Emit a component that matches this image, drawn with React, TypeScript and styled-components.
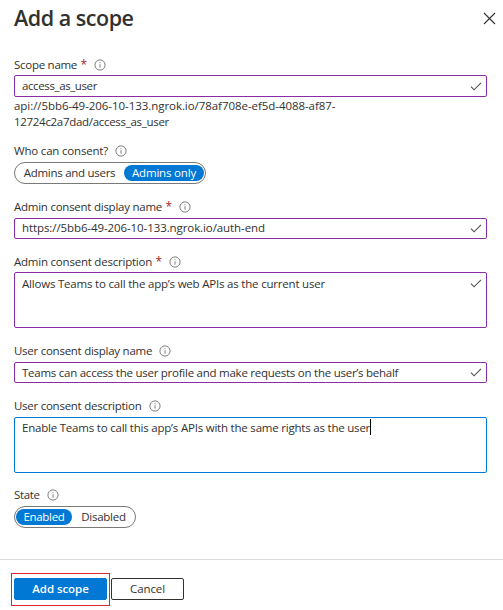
import React from 'react';
import styled, { createGlobalStyle } from 'styled-components';

const GlobalStyle = createGlobalStyle`
  body {
    margin: 0;
    background: #fff;
    color: #323130;
    font-family: 'Open Sans', 'Noto Sans', sans-serif;
    font-size: 11.5px;
    line-height: 16px;
  }
`;

const Panel = styled.main`
  display: flex;
  flex-direction: column;
  width: 503px;
  height: 610px;
  box-sizing: border-box;
  overflow: hidden;
`;

const Header = styled.header`
  display: flex;
  justify-content: space-between;
  align-items: flex-start;
  height: 55px;
  box-sizing: border-box;
  padding: 4px 7px 0 14px;
`;

const Title = styled.h1`
  margin: 0;
  font-size: 21.5px;
  font-weight: 600;
  line-height: 27px;
  letter-spacing: -0.47px;
`;

const CloseButton = styled.button`
  display: flex;
  margin: 8px 0 0;
  padding: 0;
  border: 0;
  background: none;
  color: #323130;
`;

const Form = styled.form`
  display: flex;
  flex-direction: column;
  height: 504px;
  padding: 0 16px 0 14px;
`;

const Field = styled.section<{ $after: number }>`
  display: flex;
  flex-direction: column;
  align-items: flex-start;
  margin-bottom: ${(p) => p.$after}px;
`;

const LabelRow = styled.div<{ $raised?: boolean }>`
  display: flex;
  align-items: center;
  height: 20px;
  box-sizing: border-box;
  padding-bottom: ${(p) => (p.$raised ? 2 : 0)}px;
`;

const Text = styled.span<{ $track: number }>`
  letter-spacing: ${(p) => p.$track}px;
  white-space: nowrap;
`;

const Required = styled.span`
  margin-left: 3.5px;
  width: 6.5px;
  font-size: 12px;
  color: #a4262c;
`;

const InfoSvg = styled.svg`
  margin-left: 7.3px;
`;

const Box = styled.div<{ $height: number; $top: number; $focused?: boolean }>`
  display: flex;
  justify-content: space-between;
  align-items: flex-start;
  width: 100%;
  height: ${(p) => p.$height}px;
  box-sizing: border-box;
  padding: ${(p) => p.$top}px 4px 0 7px;
  border: 1px solid ${(p) => (p.$focused ? '#0078d4' : '#8a2da5')};
  border-radius: 2px;
`;

const CheckSvg = styled.svg<{ $drop: number }>`
  margin-top: ${(p) => p.$drop}px;
`;

const Typed = styled.div`
  display: flex;
`;

const Caret = styled.i`
  width: 1px;
  height: 16px;
  margin-top: -1px;
  background: #000;
`;

const Hint = styled.div`
  display: flex;
  flex-direction: column;
  padding-top: 1px;
`;

const Pill = styled.div`
  display: flex;
  align-items: center;
  gap: 1px;
  height: 22px;
  box-sizing: border-box;
  padding: 0 1px;
  border: 1px solid #7a7977;
  border-radius: 11px;
`;

const Option = styled.span<{ $selected?: boolean; $width: number }>`
  display: flex;
  justify-content: center;
  width: ${(p) => p.$width}px;
  height: 16px;
  line-height: 15px;
  border-radius: 8px;
  background: ${(p) => (p.$selected ? '#0078d4' : 'transparent')};
  color: ${(p) => (p.$selected ? '#fff' : 'inherit')};
`;

const Footer = styled.footer`
  display: flex;
  align-items: flex-start;
  gap: 1px;
  padding: 13px 0 0 11px;
  border-top: 1px solid #dcdcdc;
`;

const Highlight = styled.div`
  display: flex;
  width: 99px;
  height: 33px;
  box-sizing: border-box;
  padding: 4px 2px;
  border: 1px solid #d92632;
`;

const Button = styled.button<{ $primary?: boolean }>`
  display: flex;
  justify-content: center;
  align-items: center;
  width: ${(p) => (p.$primary ? 93 : 73)}px;
  height: 22px;
  margin: ${(p) => (p.$primary ? 0 : '5px 0 0')};
  padding: 0;
  border: 1px solid ${(p) => (p.$primary ? '#0078d4' : '#323130')};
  border-radius: 2px;
  background: ${(p) => (p.$primary ? '#0078d4' : '#fff')};
  color: ${(p) => (p.$primary ? '#fff' : '#323130')};
  font: inherit;
  font-weight: ${(p) => (p.$primary ? 600 : 400)};
`;

const Info = () => (
  <InfoSvg width="12" height="12" viewBox="0 0 12 12" fill="none" stroke="#72706e">
    <circle cx="6" cy="6" r="5.1" strokeWidth="0.9" />
    <path d="M6 5.2v3.4M6 3.2v1" strokeWidth="0.9" />
  </InfoSvg>
);

const Check = ({ drop }: { drop: number }) => (
  <CheckSvg $drop={drop} width="12" height="9" viewBox="0 0 12 9" fill="none" stroke="#55534f" strokeWidth="1.15">
    <path d="M1 4.7L4.1 7.8L11 0.9" />
  </CheckSvg>
);

type LabelProps = { text: string; track: number; required?: boolean; raised?: boolean };

const Label = ({ text, track, required, raised }: LabelProps) => (
  <LabelRow $raised={raised}>
    <Text $track={track}>{text}</Text>
    {required && <Required>*</Required>}
    <Info />
  </LabelRow>
);

export default function App() {
  return (
    <Panel>
      <GlobalStyle />
      <Header>
        <Title>Add a scope</Title>
        <CloseButton type="button" aria-label="Close">
          <svg width="13" height="13" viewBox="0 0 13 13" fill="none" stroke="currentColor" strokeWidth="1.1">
            <path d="M1 1l11 11M12 1L1 12" />
          </svg>
        </CloseButton>
      </Header>
      <Form>
        <Field $after={12}>
          <Label text="Scope name" track={-0.27} required />
          <Box $height={22} $top={2}>
            <Text $track={-0.39}>access_as_user</Text>
            <Check drop={4} />
          </Box>
          <Hint>
            <Text $track={-0.055}>api://5bb6-49-206-10-133.ngrok.io/78af708e-ef5d-4088-af87-</Text>
            <Text $track={-0.3}>12724c2a7dad/access_as_user</Text>
          </Hint>
        </Field>
        <Field $after={14}>
          <Label text="Who can consent?" track={-0.19} raised />
          <Pill>
            <Option $width={107}>
              <Text $track={-0.28}>Admins and users</Text>
            </Option>
            <Option $width={80} $selected>
              <Text $track={-0.18}>Admins only</Text>
            </Option>
          </Pill>
        </Field>
        <Field $after={13}>
          <Label text="Admin consent display name" track={-0.25} required raised />
          <Box $height={21} $top={1}>
            <Text $track={-0.09}>https://5bb6-49-206-10-133.ngrok.io/auth-end</Text>
            <Check drop={4} />
          </Box>
        </Field>
        <Field $after={14}>
          <Label text="Admin consent description" track={-0.22} required />
          <Box $height={56} $top={3}>
            <Text $track={-0.2}>Allows Teams to call the app’s web APIs as the current user</Text>
            <Check drop={3} />
          </Box>
        </Field>
        <Field $after={14}>
          <Label text="User consent display name" track={-0.26} raised />
          <Box $height={21} $top={2}>
            <Text $track={-0.25}>Teams can access the user profile and make requests on the user’s behalf</Text>
            <Check drop={3} />
          </Box>
        </Field>
        <Field $after={13}>
          <Label text="User consent description" track={-0.26} raised />
          <Box $height={56} $top={2} $focused>
            <Typed>
              <Text $track={-0.21}>Enable Teams to call this app’s APIs with the same rights as the user</Text>
              <Caret />
            </Typed>
          </Box>
        </Field>
        <Field $after={0}>
          <Label text="State" track={-0.36} raised />
          <Pill>
            <Option $width={56} $selected>
              <Text $track={-0.31}>Enabled</Text>
            </Option>
            <Option $width={61}>
              <Text $track={-0.26}>Disabled</Text>
            </Option>
          </Pill>
        </Field>
      </Form>
      <Footer>
        <Highlight>
          <Button type="button" $primary>
            <Text $track={-0.06}>Add scope</Text>
          </Button>
        </Highlight>
        <Button type="button">
          <Text $track={-0.1}>Cancel</Text>
        </Button>
      </Footer>
    </Panel>
  );
}
